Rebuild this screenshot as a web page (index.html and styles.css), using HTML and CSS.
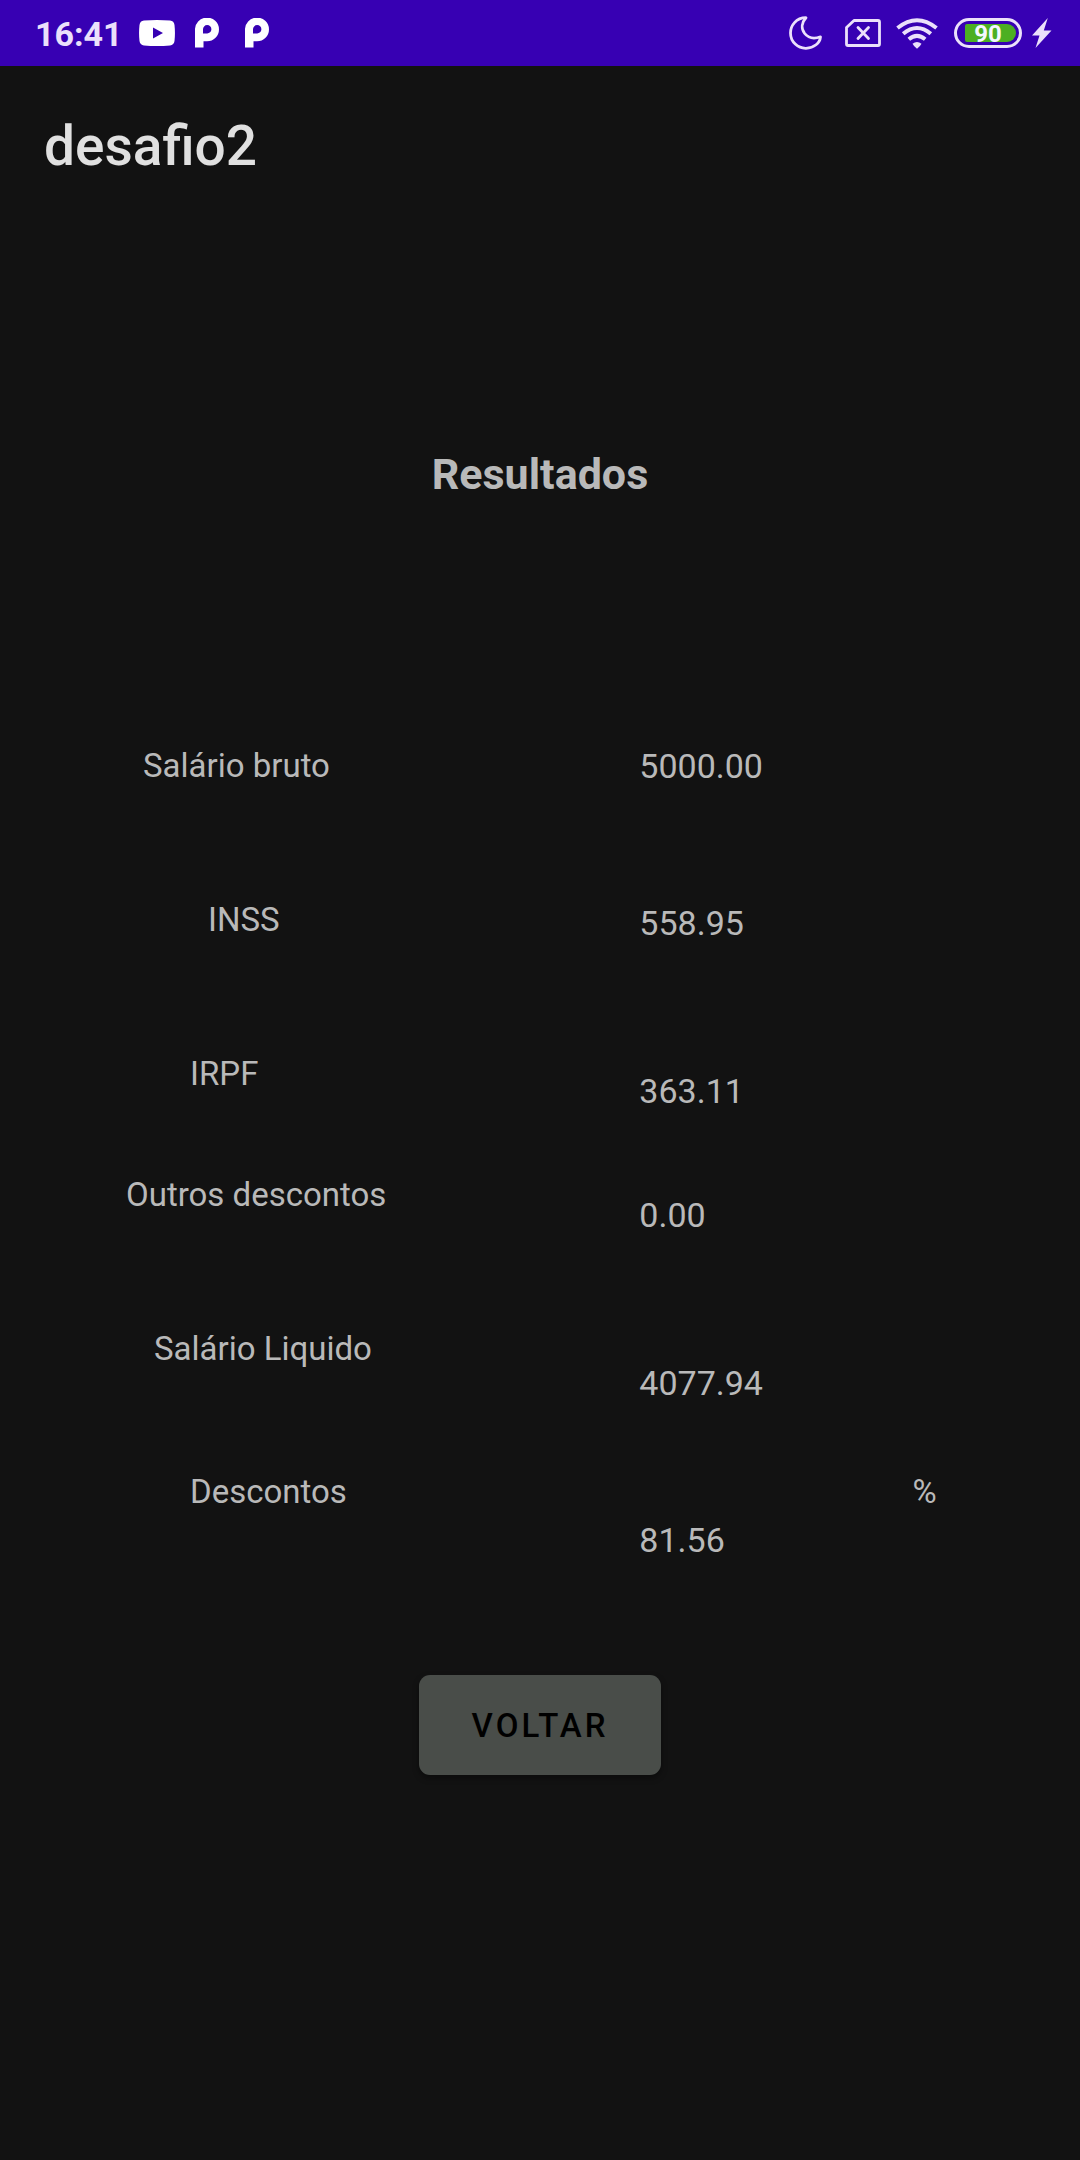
FILE: index.html
```html
<!DOCTYPE html>
<html lang="pt-BR">
<head>
<meta charset="utf-8">
<meta name="viewport" content="width=device-width, initial-scale=1">
<title>desafio2</title>
<link rel="stylesheet" href="styles.css">
</head>
<body>
<div class="status-bar">
  <div class="status-left">
    <span class="clock">16:41</span>
    <svg class="icon-video" width="36" height="26" viewBox="0 0 36 26" aria-hidden="true"><path fill="#fff" fill-rule="evenodd" d="M5 .6Q18-.4 31 .6Q35 1 35.500 5Q36.400 13 35.500 21Q35 25 31 25.400Q18 26.400 5 25.400Q1 25 .5 21Q-.4 13 .5 5Q1 1 5 .6ZM14 7.500V18.500L24 13Z"/></svg>
    <svg class="icon-p" width="24" height="30" viewBox="0 0 24 30" aria-hidden="true"><path fill="#fff" fill-rule="evenodd" d="M0 29.500V12A12 11.800 0 1 1 12 23.200H8.500V29.500ZM8 15.500H12A4.200 4.200 0 1 0 8 11.500Z"/></svg>
    <svg class="icon-p" width="24" height="30" viewBox="0 0 24 30" aria-hidden="true"><path fill="#fff" fill-rule="evenodd" d="M0 29.500V12A12 11.800 0 1 1 12 23.200H8.500V29.500ZM8 15.500H12A4.200 4.200 0 1 0 8 11.500Z"/></svg>
  </div>
  <div class="status-right">
    <svg class="icon-moon" width="34" height="34" viewBox="0 0 34 34" fill="none" stroke="#ebe0fb" stroke-width="2.800" stroke-linejoin="round" aria-hidden="true"><path d="M17 1.700C7 1.800 1.500 9.500 1.500 17C1.500 26 9 32.500 17 32.300C25 32 31 27 31.500 20.800C24 23.500 18.500 21 15.700 17.500C12 12.500 12.500 6.500 17 1.700Z"/></svg>
    <svg class="icon-sim" width="36" height="28" viewBox="0 0 36 28" fill="none" stroke="#ebe0fb" stroke-width="2.800" stroke-linejoin="round" stroke-linecap="round" aria-hidden="true"><path d="M9 1.500H33Q34.500 1.500 34.500 3V25Q34.500 26.500 33 26.500H3Q1.500 26.500 1.500 25V8.500ZM13 8.500L23.500 19.500M23.500 8.500L13 19.500"/></svg>
    <svg class="icon-wifi" width="42" height="31" viewBox="0 0 42 31" fill="none" stroke="#ebe0fb" stroke-width="4" aria-hidden="true"><path d="M1.500 10Q21-5.500 40.500 10M7.200 15.800Q21 4.200 34.800 15.800M12.800 21.200Q21 14.500 29.200 21.200"/><path fill="#ebe0fb" stroke="none" d="M16.500 25.800Q21 22 25.500 25.800Q24.500 28 21 30.800Q17.500 28 16.500 25.800Z"/></svg>
    <div class="battery"><span class="battery-level">90</span></div>
    <svg class="icon-bolt" width="20" height="30" viewBox="0 0 20 30" aria-hidden="true"><path fill="#ebe0fb" d="M15.800 0L0 17.500H7.500L3.500 30L19.500 12.500H11.800Z"/></svg>
  </div>
</div>
<header class="app-bar">
  <h1 class="app-title">desafio2</h1>
</header>
<main class="content">
  <h2 class="heading">Resultados</h2>
  <dl class="results">
    <div class="row row-gross"><dt>Salário bruto</dt><dd>5000.00</dd></div>
    <div class="row row-inss"><dt>INSS</dt><dd>558.95</dd></div>
    <div class="row row-irpf"><dt>IRPF</dt><dd>363.11</dd></div>
    <div class="row row-other"><dt>Outros descontos</dt><dd>0.00</dd></div>
    <div class="row row-net"><dt>Salário Liquido</dt><dd>4077.94</dd></div>
    <div class="row row-discount"><dt>Descontos</dt><dd>81.56</dd><dd class="unit">%</dd></div>
  </dl>
  <button class="back" type="button">VOLTAR</button>
</main>
</body>
</html>
```
FILE: styles.css
```css
* {
  box-sizing: border-box;
}

body {
  margin: 0;
  min-height: 100vh;
  background: #121212;
  color: #b9b9b9;
  font-family: Roboto, sans-serif;
  font-size: 34px;
  line-height: 40px;
}

h1, h2, dl, dd {
  margin: 0;
}

svg {
  display: block;
  flex: none;
}

.status-bar {
  display: flex;
  justify-content: space-between;
  align-items: center;
  height: 66px;
  padding: 0 28px 0 35px;
  background: #3700b3;
}

.status-left,
.status-right {
  display: flex;
  align-items: center;
}

.clock {
  margin-right: 16px;
  padding-top: 2px;
  color: #ebe0fb;
  font-size: 34px;
  font-weight: 700;
}

.icon-video {
  margin-right: 20px;
}

.icon-p + .icon-p {
  margin-left: 26px;
}

.icon-moon {
  margin-right: 22px;
}

.icon-sim {
  margin-right: 15px;
}

.icon-wifi {
  margin-right: 16px;
}

.battery {
  display: flex;
  width: 68px;
  height: 30px;
  margin-right: 10px;
  padding: 3px 3px 3px 8px;
  border: 3px solid #ebe0fb;
  border-radius: 15px;
}

.battery-level {
  flex: 1;
  padding-right: 5px;
  border-radius: 2px 9px 9px 2px;
  background: #4caf22;
  color: #f4f8ff;
  font-size: 24px;
  font-weight: 700;
  line-height: 20px;
  text-align: center;
}

.app-bar {
  display: flex;
  align-items: center;
  height: 160px;
  padding: 0 44px;
}

.app-title {
  color: #e0e0e0;
  font-size: 55px;
  font-weight: 500;
  line-height: 66px;
}

.content {
  display: flex;
  flex-direction: column;
  align-items: center;
  padding-top: 222px;
}

.heading {
  font-size: 43px;
  font-weight: 700;
  line-height: 52px;
}

.results {
  width: 100%;
  margin-top: 246px;
}

.row {
  display: grid;
  grid-template-columns: 592fr 253fr 155fr;
  align-items: start;
}

.row dt {
  font-size: 33px;
}

.row-gross {
  min-height: 154px;
}

.row-gross dt {
  padding-left: 143px;
}

.row-inss {
  min-height: 154px;
}

.row-inss dt {
  padding-left: 208px;
}

.row-inss dd {
  padding-top: 3px;
}

.row-irpf {
  min-height: 121px;
}

.row-irpf dt,
.row-discount dt {
  padding-left: 190px;
}

.row-irpf dd {
  padding-top: 17px;
}

.row-other {
  min-height: 154px;
}

.row-other dt {
  padding-left: 126px;
}

.row-other dd {
  padding-top: 20px;
}

.row-net {
  min-height: 143px;
}

.row-net dt {
  padding-left: 154px;
}

.row-net dd {
  padding-top: 34px;
}

.row-discount dd {
  padding-top: 48px;
}

.row-discount .unit {
  padding-top: 0;
  font-size: 33px;
}

.back {
  min-width: 242px;
  height: 100px;
  margin-top: 115px;
  padding: 2px 40px 0;
  border: 0;
  border-radius: 11px;
  background: #494d49;
  box-shadow: 0 3px 6px rgba(0, 0, 0, 0.4);
  color: #000;
  font: 500 33px/40px Roboto, sans-serif;
  letter-spacing: 3px;
}
```
